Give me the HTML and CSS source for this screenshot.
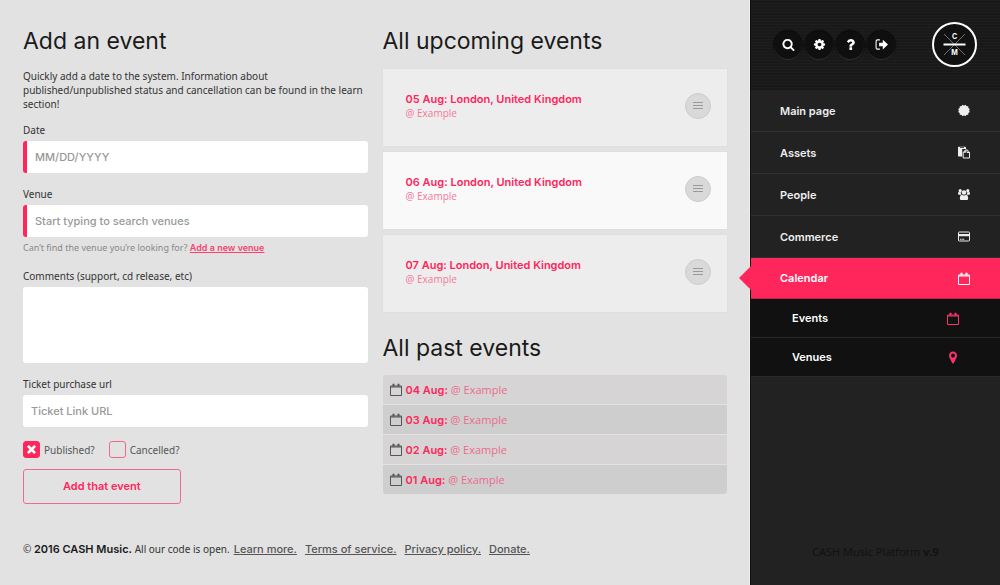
FILE: index.html
```html
<!DOCTYPE html>
<html lang="en">
<head>
<meta charset="utf-8">
<meta name="viewport" content="width=device-width, initial-scale=1">
<title>Calendar: Events</title>
<link rel="stylesheet" href="styles.css">
</head>
<body>
<svg class="sprite" aria-hidden="true">
  <symbol id="calendar" viewBox="0 0 12 13"><path fill="none" stroke="currentColor" d="M.5 3h11v9.5H.5zM1 4h10"/><path fill="none" stroke="currentColor" stroke-width="2" d="M3.5.8v2.700M8.500.8v2.700"/></symbol>
  <symbol id="menu" viewBox="0 0 10 8"><path fill="none" stroke="currentColor" d="M0 .5h10M0 3.500h10M0 6.500h10"/></symbol>
</svg>
<div class="layout">
  <main class="main">
    <div class="columns">
      <section>
        <h2>Add an event</h2>
        <form class="form">
          <p class="intro">Quickly add a date to the system. Information about published/unpublished status and cancellation can be found in the learn section!</p>
          <div class="field">
            <label for="date">Date</label>
            <input class="text required" id="date" type="text" placeholder="MM/DD/YYYY">
          </div>
          <div class="field">
            <label for="venue">Venue</label>
            <input class="text required" id="venue" type="text" placeholder="Start typing to search venues">
            <p class="hint">Can’t find the venue you’re looking for? <a href="#">Add a new venue</a></p>
          </div>
          <div class="field">
            <label for="comments">Comments (support, cd release, etc)</label>
            <textarea class="text area" id="comments"></textarea>
          </div>
          <div class="field">
            <label for="ticket">Ticket purchase url</label>
            <input class="text" id="ticket" type="text" placeholder="Ticket Link URL">
          </div>
          <div class="checks">
            <label><input type="checkbox" checked>Published?</label>
            <label><input type="checkbox">Cancelled?</label>
          </div>
          <button class="submit" type="submit">Add that event</button>
        </form>
      </section>
      <section>
        <h2>All upcoming events</h2>
        <div class="cards">
          <article class="card"><div><a href="#">05 Aug: London, United Kingdom</a><p>@ Example</p></div><button class="more" aria-label="Event options"><svg><use href="#menu"/></svg></button></article>
          <article class="card light"><div><a href="#">06 Aug: London, United Kingdom</a><p>@ Example</p></div><button class="more" aria-label="Event options"><svg><use href="#menu"/></svg></button></article>
          <article class="card"><div><a href="#">07 Aug: London, United Kingdom</a><p>@ Example</p></div><button class="more" aria-label="Event options"><svg><use href="#menu"/></svg></button></article>
        </div>
        <h2 class="past-title">All past events</h2>
        <ul class="past">
          <li><svg><use href="#calendar"/></svg><a href="#"><b>04 Aug:</b> @ Example</a></li>
          <li><svg><use href="#calendar"/></svg><a href="#"><b>03 Aug:</b> @ Example</a></li>
          <li><svg><use href="#calendar"/></svg><a href="#"><b>02 Aug:</b> @ Example</a></li>
          <li><svg><use href="#calendar"/></svg><a href="#"><b>01 Aug:</b> @ Example</a></li>
        </ul>
      </section>
    </div>
    <footer class="footer"><span>© <b>2016 CASH Music.</b> All our code is open.</span> <a href="#">Learn more.</a><a href="#">Terms of service.</a><a href="#">Privacy policy.</a><a href="#">Donate.</a></footer>
  </main>
  <aside class="sidebar">
    <header class="top">
      <div class="tools">
        <button aria-label="Search"><svg viewBox="0 0 1792 1792"><path d="M1216 832q0-185-131.500-316.500t-316.500-131.500-316.500 131.500-131.500 316.500 131.500 316.500 316.500 131.500 316.500-131.500 131.500-316.500zm512 832q0 52-38 90t-90 38q-54 0-90-38l-343-342q-179 124-399 124-143 0-273.500-55.500t-225-150-150-225-55.500-273.500 55.500-273.500 150-225 225-150 273.500-55.500 273.500 55.500 225 150 150 225 55.500 273.500q0 220-124 399l343 343q37 37 37 90z"/></svg></button>
        <button aria-label="Settings"><svg viewBox="0 0 1792 1792"><path d="M1152 896q0-106-75-181t-181-75-181 75-75 181 75 181 181 75 181-75 75-181zm512-109v222q0 12-8 23t-20 13l-185 28q-19 54-39 91 35 50 107 138 10 12 10 25t-9 23q-27 37-99 108t-94 71q-12 0-26-9l-138-108q-44 23-91 38-16 136-29 186-7 28-36 28h-222q-14 0-24.500-8.500t-11.500-21.500l-28-184q-49-16-90-37l-141 107q-10 9-25 9-14 0-25-11-126-114-165-168-7-10-7-23 0-12 8-23 15-21 51-66.500t54-70.500q-27-50-41-99l-183-27q-13-2-21-12.500t-8-23.500v-222q0-12 8-23t19-13l186-28q14-46 39-92-40-57-107-138-10-12-10-24 0-10 9-23 26-36 98.500-107.500t94.500-71.500q13 0 26 10l138 107q44-23 91-38 16-136 29-186 7-28 36-28h222q14 0 24.500 8.500t11.500 21.500l28 184q49 16 90 37l142-107q9-9 24-9 13 0 25 10 129 119 165 170 7 8 7 22 0 12-8 23-15 21-51 66.500t-54 70.500q26 50 41 98l183 28q13 2 21 12.500t8 23.500z"/></svg></button>
        <button aria-label="Help"><svg viewBox="128 128 1536 1536"><path d="M1088 1256v240q0 16-12 28t-28 12h-240q-16 0-28-12t-12-28v-240q0-16 12-28t28-12h240q16 0 28 12t12 28zm316-600q0 54-15.500 101t-35 76.500-55 59.500-57.500 43.500-61 35.500q-41 23-68.500 65t-27.500 67q0 17-12 32.500t-28 15.500h-240q-15 0-25.500-18.500t-10.500-37.500v-45q0-83 65-156.500t143-108.500q59-27 84-56t25-76q0-42-46.500-74t-107.500-32q-65 0-108 29-35 25-107 115-13 16-31 16-12 0-25-8l-164-125q-13-10-15.500-25t5.500-28q160-266 464-266 80 0 161 31t146 83 106 127.500 41 158.500z"/></svg></button>
        <button aria-label="Log out"><svg viewBox="0 0 12 12"><path d="M4.500 1.700H2.200Q1 1.700 1 3v6q0 1.300 1.200 1.300h2.300" fill="none" stroke="currentColor"/><path d="M3.800 4.300h3.400V1.500L12 6l-4.800 4.500V7.700H3.800z"/></svg></button>
      </div>
      <svg class="logo" viewBox="0 0 45 45" role="img" aria-label="CASH Music">
        <circle cx="22.500" cy="22.500" r="21.500" fill="#111" stroke="#fff" stroke-width="2"/>
        <path d="M12 12l21 21M33 12L12 33" stroke="#999" stroke-width=".7"/>
        <path d="M18.500 8h8v9l-4 4.500-4-4.500zM18.500 37h8v-9l-4-4.500-4 4.500z" fill="#111"/>
        <path d="M11.500 22.500h22" stroke="#fff" stroke-width="2"/>
        <text x="22.500" y="17" text-anchor="middle">C</text><text x="22.500" y="33" text-anchor="middle">M</text>
      </svg>
    </header>
    <nav class="nav">
      <a href="#">Main page<svg viewBox="0 0 12 12"><rect x="1.700" y="1.700" width="8.600" height="8.600"/><rect x="1.700" y="1.700" width="8.600" height="8.600" transform="rotate(30 6 6)"/><rect x="1.700" y="1.700" width="8.600" height="8.600" transform="rotate(60 6 6)"/></svg></a>
      <a href="#">Assets<svg viewBox="0 0 12 12"><path fill-rule="evenodd" d="M0 1Q0 .2.800.2h6.400Q8 .2 8 1v1.500H4.200V10H.8Q0 10 0 9.200zM2 .8v.7h4V.8z"/><path fill="none" stroke="currentColor" d="M7.500 3.500h1.800l2.200 2.200v5.800H5.200V5.800zM9 3.700V6h2.300"/><path d="M7.800 3.200v3H4.800z"/></svg></a>
      <a href="#">People<svg viewBox="0 0 12 12"><circle cx="2.200" cy="2.200" r="1.600"/><circle cx="9.800" cy="2.200" r="1.600"/><path d="M0 4q1-.8 3 0v2.300H1Q0 6.300 0 5zM12 4q-1-.8-3 0v2.300h2Q12 6.300 12 5z"/><circle cx="6" cy="4" r="2.300"/><path d="M3.500 6Q6 8 8.500 6q1.700 1 1.700 4 0 1.600-1.500 1.600H3.300Q1.800 11.600 1.800 10q0-3 1.700-4z"/></svg></a>
      <a href="#">Commerce<svg viewBox="0 0 12 12"><rect x=".5" y="1.500" width="11" height="9" rx=".8" fill="none" stroke="currentColor"/><path d="M0 3.500h12v2.300H0zM2 8.200h1.500v1H2zM4.200 8.200h2v1h-2z"/></svg></a>
      <a class="current" href="#" aria-current="page">Calendar<svg><use href="#calendar"/></svg></a>
      <div class="subnav">
        <a href="#">Events<svg><use href="#calendar"/></svg></a>
        <a href="#">Venues<svg viewBox="128 128 1536 1536"><path d="M1152 640q0-106-75-181t-181-75-181 75-75 181 75 181 181 75 181-75 75-181zm256 0q0 109-33 179l-364 774q-16 33-47.500 52t-67.500 19-67.500-19-46.500-52l-365-774q-33-70-33-179 0-212 150-362t362-150 362 150 150 362z"/></svg></a>
      </div>
    </nav>
    <p class="version">CASH Music Platform <b>v.9</b></p>
  </aside>
</div>
</body>
</html>
```
FILE: styles.css
```css
* { box-sizing: border-box; }
body, h2, p, ul { margin: 0; padding: 0; }
body { font: 10px/14px "Noto Sans", sans-serif; color: #333; background: #e2e2e2; }
a { color: inherit; text-decoration: none; }
button { padding: 0; border: 0; cursor: pointer; }
svg { display: block; fill: currentColor; }
.sprite { position: absolute; width: 0; height: 0; }

.layout { display: grid; grid-template-columns: 3fr 1fr; min-height: 100vh; }
.main { display: flex; flex-direction: column; justify-content: space-between; gap: 24px; padding: 27px 22px 29px 23px; border-right: 1px solid #eee; }
.columns { display: grid; grid-template-columns: 1fr 1fr; gap: 15px; }
h2 { margin-bottom: 14px; font: 400 23px/28px Inter, sans-serif; color: #1a1a1a; }

.form { display: flex; flex-direction: column; }
.intro { margin-bottom: 12px; }
.field { display: grid; gap: 4px; margin-bottom: 14px; }
.text { width: 100%; height: 32px; padding: 0 8px; border: 0; border-radius: 3px; background: #fff; font: 500 11px/14px Inter, sans-serif; color: #333; outline: 0; }
.text::placeholder { color: #999; opacity: 1; }
.text.required { border-left: 4px solid #ff265c; }
.text.area { display: block; height: 76px; padding: 8px; resize: none; }
.hint { font-size: 9px; color: #888; }
.hint a { font-family: Inter, sans-serif; font-weight: 600; color: #f9436f; text-decoration: underline; }

.checks { display: flex; gap: 14px; margin-bottom: 11px; }
.checks label { display: flex; align-items: center; gap: 4px; color: #555; }
.checks input { appearance: none; display: grid; place-items: center; width: 17px; height: 17px; margin: 0; border: 1px solid #f6688b; border-radius: 3px; }
.checks input:checked { background: #ff265c; border-color: #ff265c; }
.checks input:checked::before { content: ""; width: 9px; height: 9px; background: #fff; clip-path: polygon(20% 0, 50% 28%, 80% 0, 100% 20%, 72% 50%, 100% 80%, 80% 100%, 50% 72%, 20% 100%, 0 80%, 28% 50%, 0 20%); }
.submit { align-self: flex-start; padding: 9px 39px 10px; border: 1px solid #f6688b; border-radius: 3px; background: none; font: 600 11px/14px Inter, sans-serif; color: #ff265c; }

.cards { display: grid; gap: 6px; }
.card { display: flex; align-items: center; justify-content: space-between; padding: 23px 16px 26px 23px; background: #ededed; box-shadow: 0 0 1px #ccc; }
.card.light { background: #f9f9f9; }
.card a { font: 600 11px/14px Inter, sans-serif; color: #ff265c; }
.card p { font-family: "Open Sans", sans-serif; color: #f6789b; }
.more { display: grid; place-items: center; width: 26px; height: 26px; border: 1px solid #ccc; border-radius: 50%; background: #d9d9d9; color: #999; }
.more svg { width: 10px; height: 8px; }

.past-title { margin: 22px 0 13px; }
.past { display: grid; gap: 1px; overflow: hidden; border-radius: 3px; list-style: none; }
.past li { display: flex; align-items: center; gap: 4px; height: 29px; padding: 0 7px; background: #d6d4d4; }
.past li:nth-child(even) { background: #cecece; }
.past svg { width: 12px; height: 13px; color: #555; }
.past a { font: 11px/14px "Open Sans", sans-serif; color: #ea6c8d; }
.past b { font: 600 11px/14px Inter, sans-serif; color: #ff265c; }

.footer { display: flex; flex-wrap: wrap; gap: 8px; }
.footer span { margin-right: -4px; }
.footer b, .footer a { font: 500 11px/14px Inter, sans-serif; }
.footer b { font-weight: 600; color: #1a1a1a; }
.footer a { color: #555; text-decoration: underline; }

.sidebar { display: flex; flex-direction: column; background: #222; border-left: 1px solid #111; }
.top { display: flex; align-items: center; justify-content: space-between; height: 90px; padding: 0 23px 1px; background-color: #191919; background-image: repeating-linear-gradient(0deg, #fff0 0 2px, #ffffff06 2px 3px); }
.tools { display: flex; gap: 3px; }
.tools button { display: grid; place-items: center; width: 28px; height: 28px; border-radius: 50%; background: #0f0f0f; box-shadow: 0 1px 1px #333, 0 0 1px 1px #0a0a0a; color: #fff; }
.tools svg { width: 13px; height: 13px; }
.logo { width: 45px; height: 45px; }
.logo text { font: 700 7px Inter, sans-serif; fill: #fff; }
.nav a { position: relative; display: flex; align-items: center; justify-content: space-between; height: 42px; padding: 0 30px 0 29px; border-bottom: 1px solid #303030; font: 600 11px/14px Inter, sans-serif; color: #eee; }
.nav svg { width: 12px; height: 13px; }
.nav .current { height: 41px; background: #ff265c; border-bottom-color: #c81f49; color: #fff; }
.nav .current::before { content: ""; position: absolute; right: 100%; top: 8px; border: 12px solid transparent; border-left-width: 0; border-right-color: #ff265c; }
.nav .subnav a { height: 39px; padding: 0 41px; background: #111; border-bottom-color: #292929; color: #fff; }
.subnav svg { color: #f9346a; }
.version { margin: auto 0 26px; text-align: center; font: 11px/14px "Open Sans", sans-serif; color: #111; }
```
